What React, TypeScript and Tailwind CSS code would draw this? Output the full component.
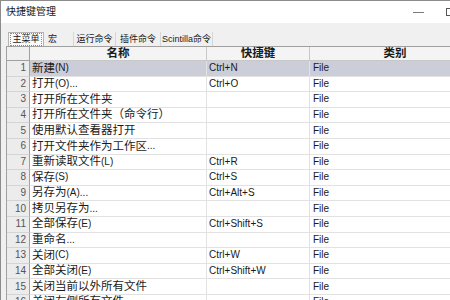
const rows: [string, string][] = [
  ['新建(N)', 'Ctrl+N'],
  ['打开(O)...', 'Ctrl+O'],
  ['打开所在文件夹', ''],
  ['打开所在文件夹（命令行）', ''],
  ['使用默认查看器打开', ''],
  ['打开文件夹作为工作区...', ''],
  ['重新读取文件(L)', 'Ctrl+R'],
  ['保存(S)', 'Ctrl+S'],
  ['另存为(A)...', 'Ctrl+Alt+S'],
  ['拷贝另存为...', ''],
  ['全部保存(E)', 'Ctrl+Shift+S'],
  ['重命名...', ''],
  ['关闭(C)', 'Ctrl+W'],
  ['全部关闭(E)', 'Ctrl+Shift+W'],
  ['关闭当前以外所有文件', ''],
  ['关闭左侧所有文件', ''],
]

const tabs = ['宏', '运行命令', '插件命令', 'Scintilla命令']

// CJK runs a bit larger than the latin bits, like the original mixed font
const Mixed = ({ text }: { text: string }) => (
  <>
    {text
      .split(/([\u3000-\u9fff\uff00-\uffef]+)/)
      .filter(Boolean)
      .map((p, i) =>
        /[\u3000-\u9fff\uff00-\uffef]/.test(p) ? (
          <span key={i} className="text-[11.5px]">{p}</span>
        ) : (
          <span key={i} className="text-[10px]">{p}</span>
        ),
      )}
  </>
)

export default function App() {
  return (
    <div
      className="flex h-[300px] w-[450px] flex-col overflow-hidden border-l border-t border-[#8c8c8c] bg-[#f0f0f0] text-[#1a1a1a]"
      style={{ fontFamily: '"Liberation Sans", "Noto Sans CJK SC", sans-serif' }}
    >
      <div className="flex h-[22px] shrink-0 items-center justify-between bg-white pl-[5px]">
        <span className="text-[10px] leading-none">快捷键管理</span>
        <div className="-mr-[4px] flex items-center gap-[22px]">
          <div className="h-px w-[11px] bg-[#7a7a7a]" />
          <div className="h-[8px] w-[8px] border border-[#555]" />
        </div>
      </div>

      <div className="flex shrink-0 items-end pl-[7px] pt-[9px] text-[9px] leading-none">
        <div className="flex h-[14px] w-[36px] items-center justify-center border border-b-0 border-[#b4b4b4] bg-[#fafafa]">
          <span className="border border-dotted border-[#888] px-[1px] py-[1px]">主菜单</span>
        </div>
        {tabs.map((t, i) => (
          <div
            key={t}
            className={
              i === 0
                ? 'flex h-[14px] w-[30px] items-center border-r border-[#d6d6d6] pl-[4px]'
                : i === 1
                  ? 'flex h-[14px] w-[42px] items-center justify-center border-r border-[#d6d6d6]'
                  : i === 3
                    ? 'flex h-[14px] w-[52px] items-center justify-center border-r border-[#d6d6d6]'
                    : 'flex h-[14px] w-[45px] items-center justify-center border-r border-[#d6d6d6]'
            }
          >
            {t}
          </div>
        ))}
      </div>

      <div className="ml-[5px] flex-1 border-l border-t border-[#a0a0a0] bg-white">
        <div className="flex h-[14px] text-[11.5px] font-bold leading-none">
          <div className="w-[23px] shrink-0 border-b border-r border-[#a0a0a0] bg-[#f0f0f0]" />
          <div className="flex w-[177px] shrink-0 items-center justify-center border-b border-r border-[#c8c8c8] bg-[#f4f4f4]">名称</div>
          <div className="flex w-[103px] shrink-0 items-center justify-center border-b border-r border-[#c8c8c8] bg-[#f4f4f4]">快捷键</div>
          <div className="flex w-[170px] shrink-0 items-center justify-center border-b border-[#c8c8c8] bg-[#f4f4f4]">类别</div>
        </div>

        {rows.map(([name, key], i) => {
          const sel = i === 0
          return (
            <div key={i} className="flex h-[15.6px] leading-none">
              <div className="flex w-[23px] shrink-0 items-center justify-end border-b border-r border-b-[#d4d4d4] border-r-[#a0a0a0] bg-[#ececec] pr-[3px] text-[10px] text-[#555]">
                {i + 1}
              </div>
              <div className={(sel ? 'bg-[#cbcdd9] ' : '') + 'flex w-[177px] shrink-0 items-center whitespace-nowrap border-b border-r border-[#e2e2e2] pl-[2px]'}>
                <Mixed text={name} />
              </div>
              <div className={(sel ? 'bg-[#cbcdd9] ' : '') + 'flex w-[103px] shrink-0 items-center border-b border-r border-[#e2e2e2] pl-[2px] text-[10px]'}>
                {key}
              </div>
              <div className={(sel ? 'bg-[#cbcdd9] ' : '') + 'flex w-[170px] shrink-0 items-center border-b border-[#e2e2e2] pl-[3px] text-[10px]'}>
                File
              </div>
            </div>
          )
        })}
      </div>
    </div>
  )
}
